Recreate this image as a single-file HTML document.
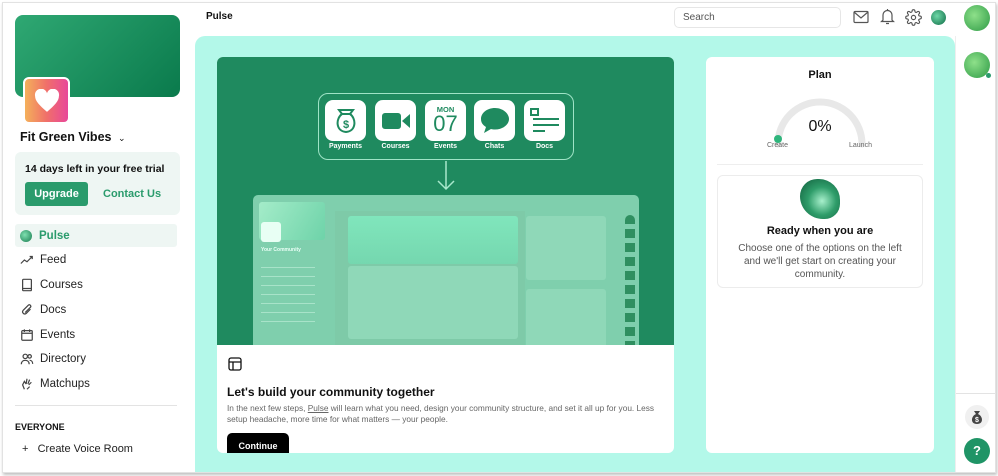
<!DOCTYPE html>
<html><head><meta charset="utf-8">
<style>
*{box-sizing:border-box;margin:0;padding:0}
body{width:998px;height:476px;overflow:hidden;background:#fff;font-family:"Liberation Sans",sans-serif;position:relative;color:#111}
.frame{position:absolute;left:2px;top:2px;width:994px;height:471px;border:1px solid #e2e2e2;box-shadow:1px 2px 3px rgba(0,0,0,.25)}
.abs{position:absolute}
.nav{position:absolute;left:15px;width:162px;height:24px;display:flex;align-items:center;font-size:11.5px;color:#222}
.nav svg{width:14px;height:14px;margin:0 6px 0 5px;stroke:#444;fill:none;stroke-width:1.4}
.tile{position:absolute;top:43px;width:41px;height:41px;background:#fff;border-radius:8px;display:flex;align-items:center;justify-content:center}
.tl{position:absolute;top:86px;width:41px;text-align:center;color:#fff;font-size:7px;font-weight:bold}
</style></head><body>
<div class="frame"></div>

<!-- sidebar -->
<div class="abs" style="left:15px;top:15px;width:165px;height:82px;border-radius:8px;background:linear-gradient(135deg,#2fa873,#0a7a4c)"></div>
<div class="abs" style="left:23px;top:77px;width:47px;height:47px;border-radius:6px;border:2px solid #fff;background:linear-gradient(90deg,#f4b05a,#f0706a 50%,#e8479a);display:flex;align-items:center;justify-content:center">
<svg width="26" height="24" viewBox="0 0 24 22"><path d="M12 21C5 15 1 11 1 6.5A5.5 5.5 0 0 1 12 4a5.5 5.5 0 0 1 11 2.5C23 11 19 15 12 21z" fill="#fff"/></svg></div>
<div class="abs" style="left:20px;top:130px;font-size:12.5px;font-weight:bold">Fit Green Vibes <span style="font-size:9px;font-weight:normal;margin-left:3px">⌄</span></div>
<div class="abs" style="left:15px;top:152px;width:165px;height:63px;background:#eef6f3;border-radius:6px"></div>
<div class="abs" style="left:25px;top:163px;font-size:10.5px;font-weight:bold">14 days left in your free trial</div>
<div class="abs" style="left:25px;top:182px;width:63px;height:24px;background:#2a9b6c;border-radius:3px;color:#fff;font-size:11px;font-weight:bold;text-align:center;line-height:24px">Upgrade</div>
<div class="abs" style="left:103px;top:188px;font-size:11px;font-weight:bold;color:#2a9b6c">Contact Us</div>
<div class="abs" style="left:15px;top:224px;width:162px;height:23px;background:#eef6f3;border-radius:3px"></div>
<div class="nav" style="top:224px;color:#2a9b6c;font-weight:bold"><span style="width:12px;height:12px;border-radius:50%;background:radial-gradient(circle at 40% 40%,#7fe0b0,#177a4f);margin:0 7px 0 5px"></span>Pulse</div>
<div class="nav" style="top:248px"><svg viewBox="0 0 16 16"><path d="M1 12l4-4 3 2 6-6M11 4h3v3"/></svg>Feed</div>
<div class="nav" style="top:273px"><svg viewBox="0 0 16 16"><rect x="3" y="1.5" width="10" height="13" rx="1"/><path d="M3 12h10"/></svg>Courses</div>
<div class="nav" style="top:298px"><svg viewBox="0 0 16 16"><path d="M12 7l-5 5a2.5 2.5 0 0 1-3.5-3.5l6-6a1.7 1.7 0 0 1 2.4 2.4l-6 6"/></svg>Docs</div>
<div class="nav" style="top:323px"><svg viewBox="0 0 16 16"><rect x="2" y="3" width="12" height="11" rx="1"/><path d="M2 6h12M5 1.5v3M11 1.5v3"/></svg>Events</div>
<div class="nav" style="top:347px"><svg viewBox="0 0 16 16"><circle cx="6" cy="5" r="2.5"/><circle cx="11" cy="5" r="2"/><path d="M1.5 14c0-3 2-4.5 4.5-4.5S10.5 11 10.5 14M11 9.5c2 0 3.5 1.5 3.5 4"/></svg>Directory</div>
<div class="nav" style="top:372px"><svg viewBox="0 0 16 16"><path d="M5 14l-2-5 2-4 2 3M7 8l1-6M9 8l2-5M10 9l3-3M8 14l3-3"/></svg>Matchups</div>
<div class="abs" style="left:15px;top:405px;width:162px;height:1px;background:#e3e3e3"></div>
<div class="abs" style="left:15px;top:422px;font-size:9px;font-weight:bold">EVERYONE</div>
<div class="abs" style="left:22px;top:443px;font-size:11px;color:#222">+&nbsp;&nbsp;&nbsp;Create Voice Room</div>

<!-- header -->
<div class="abs" style="left:206px;top:11px;font-size:10px;font-weight:bold">Pulse</div>
<div class="abs" style="left:674px;top:7px;width:167px;height:21px;border:1px solid #e6e6e6;border-radius:5px;font-size:10px;color:#555;padding:4px 8px">Search</div>
<svg class="abs" style="left:853px;top:10px" width="16" height="14" viewBox="0 0 16 14" fill="none" stroke="#555" stroke-width="1.2"><rect x="1" y="1.5" width="14" height="11" rx="1"/><path d="M1 2l7 6 7-6"/></svg>
<svg class="abs" style="left:880px;top:8px" width="15" height="17" viewBox="0 0 15 17" fill="none" stroke="#555" stroke-width="1.2"><path d="M3 12V7a4.5 4.5 0 0 1 9 0v5l1.5 1.5h-12zM6 15.5h3M7.5 1v1.5"/></svg>
<svg class="abs" style="left:905px;top:9px" width="17" height="17" viewBox="0 0 24 24" fill="none" stroke="#555" stroke-width="1.6"><circle cx="12" cy="12" r="3"/><path d="M19.4 15a1.7 1.7 0 0 0 .3 1.8l.1.1a2 2 0 1 1-2.8 2.8l-.1-.1a1.7 1.7 0 0 0-2.9 1.2V21a2 2 0 1 1-4 0v-.1a1.7 1.7 0 0 0-2.9-1.2l-.1.1a2 2 0 1 1-2.8-2.8l.1-.1A1.7 1.7 0 0 0 3 14H3a2 2 0 1 1 0-4h.1a1.7 1.7 0 0 0 1.2-2.9l-.1-.1a2 2 0 1 1 2.8-2.8l.1.1A1.7 1.7 0 0 0 10 3V3a2 2 0 1 1 4 0v.1a1.7 1.7 0 0 0 2.9 1.2l.1-.1a2 2 0 1 1 2.8 2.8l-.1.1A1.7 1.7 0 0 0 21 10h.1a2 2 0 1 1 0 4z"/></svg>
<div class="abs" style="left:931px;top:10px;width:15px;height:15px;border-radius:50%;background:radial-gradient(circle at 40% 40%,#6fd8a8,#0e6b45)"></div>

<!-- right rail -->
<div class="abs" style="left:955px;top:36px;width:1px;height:436px;background:#eee"></div>
<div class="abs" style="left:964px;top:5px;width:26px;height:26px;border-radius:50%;background:radial-gradient(circle at 40% 40%,#8ee08a,#2d9a45)"></div>
<div class="abs" style="left:964px;top:52px;width:26px;height:26px;border-radius:50%;background:radial-gradient(circle at 40% 40%,#8ee08a,#2d9a45)"></div>
<div class="abs" style="left:986px;top:73px;width:5px;height:5px;border-radius:50%;background:#2a9b6c"></div>
<div class="abs" style="left:956px;top:393px;width:40px;height:1px;background:#e3e3e3"></div>
<div class="abs" style="left:965px;top:405px;width:24px;height:24px;border-radius:50%;background:#f0f0f0"></div>
<svg class="abs" style="left:970px;top:409px" width="14" height="16" viewBox="0 0 14 16"><path d="M4 2h6l-2 3h-2zM6 5C1 7 0 15 7 15s6-8 1-10z" fill="#444"/><text x="7" y="13" text-anchor="middle" font-size="7" fill="#fff" font-family="Liberation Sans" font-weight="bold">$</text></svg>
<div class="abs" style="left:964px;top:438px;width:26px;height:26px;border-radius:50%;background:#1f9466;color:#fff;font-weight:bold;font-size:13px;text-align:center;line-height:26px">?</div>

<!-- main mint -->
<div class="abs" style="left:195px;top:36px;width:760px;height:436px;background:#b3f8e9;border-radius:10px 10px 0 0"></div>

<!-- main card -->
<div class="abs" style="left:217px;top:57px;width:457px;height:396px;background:#fff;border-radius:6px;overflow:hidden">
 <div class="abs" style="left:0;top:0;width:457px;height:288px;background:#1f8a5f;overflow:hidden">
 <div class="abs" style="left:101px;top:36px;width:256px;height:67px;border:1.5px solid #9fe3c6;border-radius:10px"></div>
 <div class="tile" style="left:108px"><svg width="26" height="28" viewBox="0 0 26 28" fill="none" stroke="#1f8a5f" stroke-width="2"><path d="M9 7l-3-4h14l-3 4M9 7h8M9 7C3 11 2 24 13 25c11-1 10-14 4-18"/><text x="13" y="21" text-anchor="middle" font-size="11" font-weight="bold" fill="#1f8a5f" stroke="none" font-family="Liberation Sans">$</text></svg></div>
 <div class="tile" style="left:158px"><svg width="30" height="20" viewBox="0 0 30 20" fill="#1f8a5f"><rect x="1" y="2" width="19" height="16" rx="3"/><path d="M21 10l8-7v14z"/></svg></div>
 <div class="tile" style="left:208px;flex-direction:column;color:#1f8a5f;line-height:1"><span style="font-size:7.5px;font-weight:bold">MON</span><span style="font-size:22px;line-height:22px">07</span></div>
 <div class="tile" style="left:257px"><svg width="32" height="30" viewBox="0 0 32 30" fill="#1f8a5f"><path d="M16 2C8 2 2 7 2 13c0 4 2 6 5 8l-2 6 7-4c1 .3 2.5 .5 4 .5 8 0 14-5 14-10.5S24 2 16 2z"/></svg></div>
 <div class="tile" style="left:307px"><svg width="32" height="28" viewBox="0 0 32 28" fill="none" stroke="#1f8a5f" stroke-width="2"><rect x="2" y="2" width="7" height="6"/><path d="M4 12h26M4 18h26M4 24h12"/></svg></div>
 <div class="tl" style="left:108px">Payments</div><div class="tl" style="left:158px">Courses</div><div class="tl" style="left:208px">Events</div><div class="tl" style="left:257px">Chats</div><div class="tl" style="left:307px">Docs</div>
 <svg class="abs" style="left:219px;top:104px" width="20" height="30" viewBox="0 0 20 30" fill="none" stroke="#a8e8cc" stroke-width="1.5"><path d="M10 0v28M2 20l8 8 8-8"/></svg>
 <div class="abs" style="left:36px;top:138px;width:386px;height:160px;background:#7fcfad;border-radius:5px">
  <div class="abs" style="left:6px;top:7px;width:66px;height:38px;background:linear-gradient(120deg,#a4ecc9,#6ed3a9);border-radius:3px"></div>
  <div class="abs" style="left:8px;top:27px;width:20px;height:20px;background:#e8fff4;border-radius:3px"></div>
  <div class="abs" style="left:8px;top:52px;font-size:5px;color:#eafff6;font-weight:bold">Your Community</div>
  <div class="abs" style="left:8px;top:68px;width:54px;height:60px;background:repeating-linear-gradient(#7fcfad 0 4px,#a8e3c9 4px 5px,#7fcfad 5px 9px)"></div>
  <div class="abs" style="left:82px;top:16px;width:190px;height:144px;background:#7ecaa8"></div>
  <div class="abs" style="left:95px;top:21px;width:170px;height:48px;background:linear-gradient(#80e6bc,#75d7af);border-radius:3px"></div>
  <div class="abs" style="left:95px;top:71px;width:170px;height:73px;background:#8fd8b8;border-radius:3px"></div>
  <div class="abs" style="left:273px;top:21px;width:80px;height:64px;background:#8fd8b8;border-radius:3px"></div>
  <div class="abs" style="left:273px;top:94px;width:80px;height:60px;background:#8fd8b8;border-radius:3px"></div>
  <div class="abs" style="left:372px;top:20px;width:10px;height:138px;background:repeating-linear-gradient(#2f8f60 0 9px,transparent 9px 14px);border-radius:5px"></div>
 </div>
 </div>
 <svg class="abs" style="left:11px;top:300px" width="14" height="14" viewBox="0 0 14 14" fill="none" stroke="#111" stroke-width="1.3"><rect x="1" y="1" width="12" height="12" rx="2"/><path d="M1 5h12M5 5v8"/></svg>
 <div class="abs" style="left:10px;top:328px;font-size:12px;font-weight:bold">Let's build your community together</div>
 <div class="abs" style="left:10px;top:346px;font-size:8.3px;color:#666;line-height:11px;width:440px">In the next few steps, <u>Pulse</u> will learn what you need, design your community structure, and set it all up for you. Less setup headache, more time for what matters — your people.</div>
 <div class="abs" style="left:10px;top:376px;width:62px;height:30px;background:#000;border-radius:5px;color:#fff;font-size:9px;font-weight:bold;text-align:center;padding-top:8px">Continue</div>
</div>

<!-- plan card -->
<div class="abs" style="left:706px;top:57px;width:228px;height:396px;background:#fff;border-radius:6px">
 <div class="abs" style="left:0;top:12px;width:228px;text-align:center;font-size:11px;font-weight:bold">Plan</div>
 <svg class="abs" style="left:64px;top:33px" width="100" height="60" viewBox="0 0 100 60" fill="none"><path d="M8 54A42 42 0 0 1 92 54" stroke="#e8e8e8" stroke-width="7" stroke-linecap="round"/><circle cx="8" cy="49" r="4" fill="#2fb57c"/></svg>
 <div class="abs" style="left:0;top:61px;width:228px;text-align:center;font-size:16px">0%</div>
 <div class="abs" style="left:61px;top:85px;font-size:7px;color:#666">Create</div>
 <div class="abs" style="left:143px;top:85px;font-size:7px;color:#666">Launch</div>
 <div class="abs" style="left:11px;top:107px;width:206px;height:1px;background:#eee"></div>
 <div class="abs" style="left:11px;top:118px;width:206px;height:113px;border:1px solid #ececec;border-radius:6px"></div>
 <div class="abs" style="left:94px;top:122px;width:40px;height:40px;border-radius:45% 55% 40% 60%;background:radial-gradient(circle at 55% 55%,#a8f0cc,#2f9d6a 45%,#0f5a3a)"></div>
 <div class="abs" style="left:0;top:168px;width:228px;text-align:center;font-size:11px;font-weight:bold">Ready when you are</div>
 <div class="abs" style="left:24px;top:185px;width:180px;text-align:center;font-size:10px;color:#555;line-height:13px">Choose one of the options on the left and we'll get start on creating your community.</div>
</div>
</body></html>
